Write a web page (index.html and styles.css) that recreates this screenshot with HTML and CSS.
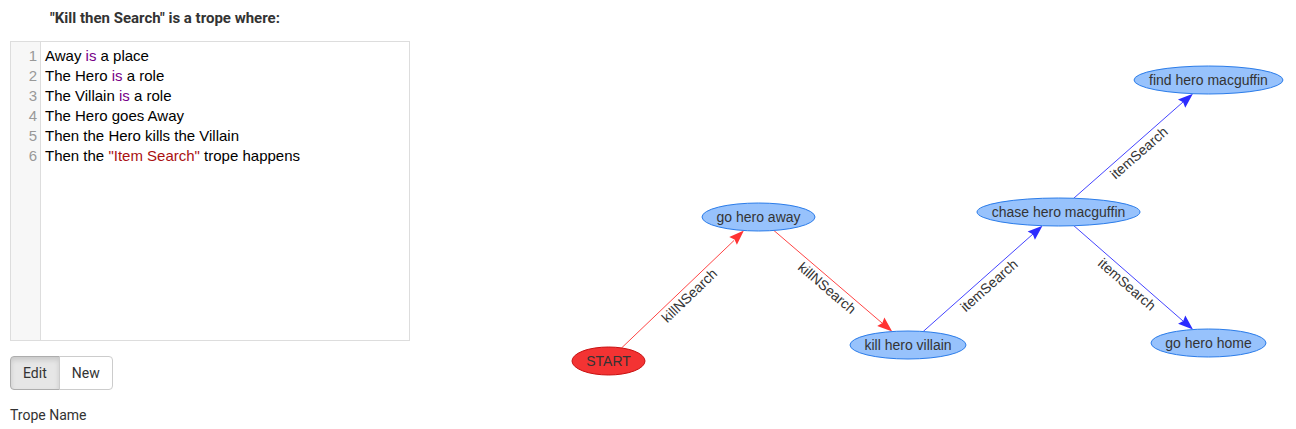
FILE: index.html
```html
<!DOCTYPE html>
<html lang="en">
<head>
    <meta charset="UTF-8">
    <title>Trope Editor</title>
    <link rel="stylesheet" href="styles.css">
</head>
<body>
    <div class="page">
        <div class="side">
            <h4 class="trope-title">"Kill then Search" is a trope where:</h4>
            <div class="editor">
                <div class="gutter">
                    <div>1</div>
                    <div>2</div>
                    <div>3</div>
                    <div>4</div>
                    <div>5</div>
                    <div>6</div>
                </div>
                <div class="code">
                    <div>Away <span class="kw">is</span> a place</div>
                    <div>The Hero <span class="kw">is</span> a role</div>
                    <div>The Villain <span class="kw">is</span> a role</div>
                    <div>The Hero goes Away</div>
                    <div>Then the Hero kills the Villain</div>
                    <div>Then the <span class="str">"Item Search"</span> trope happens</div>
                </div>
            </div>
            <div class="btn-group">
                <button class="btn active">Edit</button>
                <button class="btn">New</button>
            </div>
            <label class="field-label">Trope Name</label>
        </div>
        <div class="graph">
            <svg width="876" height="429" viewBox="420 0 876 429">
                <!-- edges -->
                <g class="edge red">
                    <line x1="621.5" y1="348" x2="734" y2="240.5"/>
                    <polygon points="0,0 -15,-5.5 -13,0 -15,5.5" transform="translate(743.9 230.5) rotate(-43.83)"/>
                    <text transform="translate(683 289) rotate(-43.83)" y="14">killNSearch</text>
                </g>
                <g class="edge red">
                    <line x1="773.8" y1="230.4" x2="882" y2="323"/>
                    <polygon points="0,0 -15,-5.5 -13,0 -15,5.5" transform="translate(892.2 331.5) rotate(40.47)"/>
                    <text transform="translate(833 281) rotate(40.47)" y="14">killNSearch</text>
                </g>
                <g class="edge blue">
                    <line x1="923.2" y1="331.5" x2="1033" y2="234"/>
                    <polygon points="0,0 -15,-5.5 -13,0 -15,5.5" transform="translate(1042.5 225.7) rotate(-41.56)"/>
                    <text transform="translate(983 278.5) rotate(-41.56)" y="14">itemSearch</text>
                </g>
                <g class="edge blue">
                    <line x1="1073.7" y1="198.3" x2="1183" y2="102"/>
                    <polygon points="0,0 -15,-5.5 -13,0 -15,5.5" transform="translate(1192.9 93.7) rotate(-41.25)"/>
                    <text transform="translate(1133 146) rotate(-41.25)" y="14">itemSearch</text>
                </g>
                <g class="edge blue">
                    <line x1="1073.8" y1="225.7" x2="1183" y2="321"/>
                    <polygon points="0,0 -15,-5.5 -13,0 -15,5.5" transform="translate(1193 329.5) rotate(41.03)"/>
                    <text transform="translate(1133 277.5) rotate(41.03)" y="14">itemSearch</text>
                </g>

                <!-- nodes -->
                <g class="node start">
                    <ellipse cx="608.5" cy="361" rx="36.5" ry="14"/>
                    <text x="608.5" y="366">START</text>
                </g>
                <g class="node">
                    <ellipse cx="758.5" cy="217" rx="56.5" ry="14"/>
                    <text x="758.5" y="222">go hero away</text>
                </g>
                <g class="node">
                    <ellipse cx="908" cy="345" rx="58" ry="14"/>
                    <text x="908" y="350">kill hero villain</text>
                </g>
                <g class="node">
                    <ellipse cx="1058.5" cy="212" rx="81.5" ry="14"/>
                    <text x="1058.5" y="217">chase hero macguffin</text>
                </g>
                <g class="node">
                    <ellipse cx="1208.5" cy="80" rx="74.5" ry="14"/>
                    <text x="1208.5" y="85">find hero macguffin</text>
                </g>
                <g class="node">
                    <ellipse cx="1208.5" cy="343" rx="57.5" ry="14"/>
                    <text x="1208.5" y="348">go hero home</text>
                </g>
            </svg>
        </div>
    </div>
</body>
</html>
```

FILE: styles.css
```css
body, html {
    margin: 0;
    padding: 0;
    font-family: Roboto, "Liberation Sans", sans-serif;
    font-size: 14px;
    color: #333;
    background: #fff;
    overflow: hidden;
}
.page {
    display: flex;
    height: 429px;
}
.side {
    width: 400px;
    padding-left: 10px;
    padding-right: 10px;
    display: flex;
    flex-direction: column;
    align-items: flex-start;
}
.trope-title {
    margin: 10px 0 14px 40px;
    font-size: 15px;
    line-height: 17px;
    font-weight: bold;
}
.editor {
    box-sizing: border-box;
    width: 400px;
    height: 300px;
    border: 1px solid #ddd;
    display: flex;
    font-family: "Liberation Sans", Arial, sans-serif;
    font-size: 15px;
    line-height: 20px;
    color: #000;
}
.gutter {
    width: 26px;
    padding: 4px 3px 0 0;
    text-align: right;
    color: #999;
    background: #f7f7f7;
    border-right: 1px solid #ddd;
}
.code {
    padding: 4px 0 0 4px;
}
.code div {
    white-space: pre;
}
.kw {
    color: #708;
}
.str {
    color: #a11;
}
.btn-group {
    display: flex;
    margin-top: 15px;
}
.btn {
    font-family: Roboto, "Liberation Sans", sans-serif;
    font-size: 14px;
    line-height: 20px;
    padding: 6px 12px;
    color: #333;
    background: #fff;
    border: 1px solid #ccc;
    margin: 0;
    cursor: pointer;
}
.btn:first-child {
    border-radius: 4px 0 0 4px;
}
.btn:last-child {
    border-radius: 0 4px 4px 0;
    margin-left: -1px;
}
.btn.active {
    background: #e6e6e6;
    border-color: #adadad;
    box-shadow: inset 0 3px 5px rgba(0, 0, 0, 0.125);
}
.field-label {
    margin-top: 15px;
    line-height: 20px;
}
.graph {
    flex: 1;
}
.graph svg {
    display: block;
}
.edge line {
    stroke-width: 1;
}
.edge text {
    font-family: "Liberation Sans", Arial, sans-serif;
    font-size: 14px;
    fill: #343434;
    text-anchor: middle;
}
.edge.red line {
    stroke: #ff4444;
}
.edge.red polygon {
    fill: #ff3333;
}
.edge.blue line {
    stroke: #4444ff;
}
.edge.blue polygon {
    fill: #2b2bff;
}
.node ellipse {
    fill: #97c2fc;
    stroke: #2b7ce9;
    stroke-width: 1;
}
.node.start ellipse {
    fill: #f33333;
    stroke: #c81010;
}
.node text {
    font-family: "Liberation Sans", Arial, sans-serif;
    font-size: 14px;
    fill: #343434;
    text-anchor: middle;
}
```
